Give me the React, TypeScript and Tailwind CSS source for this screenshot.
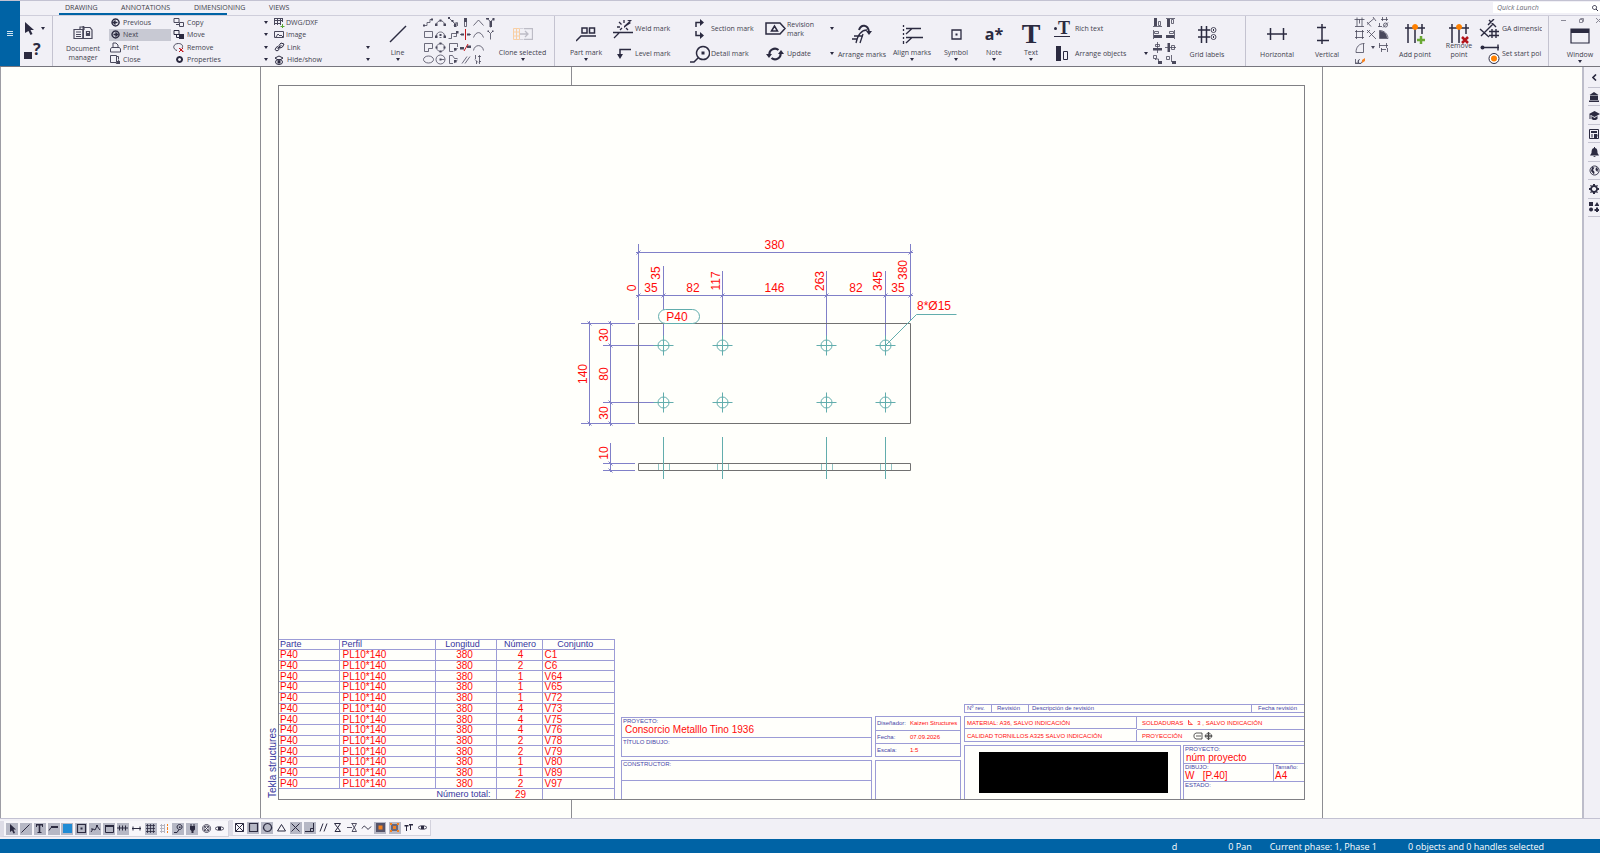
import clsx from 'clsx';
import { Fragment, ReactNode } from 'react';

const INK = '#2b2a40';
const GREY = '#4a495c';

type Shape = { d?: string; f?: string; r?: string; o?: string };

// d = outline, f = filled, r = red outline, o = orange filled
function Ico({ w = 12, h = 12, d, f, r, o, sw = 1, color = INK, className }: Shape & { w?: number; h?: number; sw?: number; color?: string; className?: string }) {
  return (
    <svg width={w} height={h} viewBox={`0 0 ${w} ${h}`} className={clsx('shrink-0', className)} fill="none" aria-hidden="true">
      {f && <path d={f} fill={color} />}
      {d && <path d={d} stroke={color} strokeWidth={sw} />}
      {r && <path d={r} stroke="#c4161c" strokeWidth={1} />}
      {o && <path d={o} fill="#f58220" />}
    </svg>
  );
}

function Caret({ className }: { className?: string }) {
  return <Ico w={4} h={3} f="M0 0h4L2 3Z" className={className} />;
}

function BigButton({ icon, label, caret, className, gap = 'mt-1' }: { icon: ReactNode; label: ReactNode; caret?: boolean; className: string; gap?: string }) {
  return (
    <button type="button" className={clsx('flex shrink-0 flex-col items-center pt-1.5 whitespace-nowrap', className)}>
      <span className="flex h-6 items-center justify-center">{icon}</span>
      <span className={clsx('leading-[9px]', caret ? 'mt-0.5' : gap)}>{label}</span>
      {caret && <Caret className="mt-px" />}
    </button>
  );
}

function RowButton({ icon, label, caret, active, box = 'w-6' }: { icon: ReactNode; label: ReactNode; caret?: boolean; active?: boolean; box?: string }) {
  return (
    <button type="button" className={clsx('flex h-full w-full items-center text-left leading-[9px] whitespace-nowrap', active && 'bg-[#c8c9d3]')}>
      <span className={clsx('flex shrink-0 justify-center', box)}>{icon}</span>
      <span>{label}</span>
      {caret && <Caret className="mr-[3px] ml-auto" />}
    </button>
  );
}

function MiniGrid({ items, className }: { items: Shape[]; className: string }) {
  return (
    <div className={clsx('grid shrink-0 grid-rows-4', className)}>
      {items.map((s, i) => (
        <button key={i} type="button" aria-label={`Tool ${i + 1}`} className="flex items-center justify-center">
          <Ico w={11} h={11} sw={0.8} color={GREY} {...s} />
        </button>
      ))}
    </div>
  );
}

const lineTools: Shape[] = [
  { d: 'M1 8.500h3v-3h3v-3h3', f: 'M0 7.500h2v2H0ZM8 1.500h2v2H8Z' },
  { d: 'M1.500 7.500C2 2.500 9 2.500 9.500 7.500', f: 'M0 6.500h2.500v2.500H0ZM8.500 6.500h2.500v2.500H8.500ZM4.500 2.500h2v2h-2Z' },
  { d: 'M2 2l5 5M6 8.500l3.500-3.500M6.500 6h3v3', f: 'M0 0h2v2H0ZM3.500 3h2v2h-2ZM6 7h2.500v3H6Z' },
  { f: 'M4 1h3v4H4Z', d: 'M4.500 1.500h2v8h-2Z' },
  { d: 'M0.500 8.500L5.500 3L10.500 8.500' },
  { d: 'M2 1.500l3.500 3v6M9 1.500l-3.500 3', f: 'M4.500 4h2.500v6H4.500ZM1 1h3v1.500H1ZM7.500 1h2v2.500h-2Z' },
  { d: 'M1.500 2.500h8v6h-8Z' },
  { d: 'M1.500 7.500C1 1.500 10 1.500 9.500 7.500M4.500 8.500h2', f: 'M0 6.500h2.500v2.500H0ZM8.500 6.500h2.500v2.500H8.500ZM4.500 5h2v2h-2Z' },
  { d: 'M0.500 9.500h3v-5h5M5.500 7.500h3v-4', f: 'M8 2h2.500v2.500H8Z' },
  { d: 'M0 5.500h4M7 5.500h4', f: 'M1 4.500h3v2H1ZM7 4.500h3v2H7Z', r: 'M5.500 0v11' },
  { d: 'M0.500 8.500C3 2 8 2 10.500 8.500' },
  { d: 'M3.500 2.500l2 2v6M7.500 2.500l-2 2', f: 'M2.500 1.500h1.500v1.500H2.500ZM7 1.500h1.500v1.500H7Z' },
  { d: 'M1.500 1.500h8v5h-4v3h-4Z' },
  { d: 'M5.500 1.500a4 4 0 1 0 0.100 0Z', f: 'M4.500 .5h2v2h-2ZM4.500 8.500h2v2h-2ZM.5 4.500h2v2h-2ZM8.500 4.500h2v2h-2Z' },
  { d: 'M9.500 5V1.500h-8v8H5M6 9.500l3.500-3.500', f: 'M6 6h2.500v2.500H6Z' },
  { f: 'M0 5h4v2.500H0ZM7 3.500h4v2.500H7Z', r: 'M4 9L8 2' },
  { d: 'M0.500 8.500C1.500 2 9.500 2 10.500 8.500' },
  {},
  { d: 'M0.500 5.500a5 3.500 0 1 0 10 0a5 3.500 0 1 0 -10 0' },
  { d: 'M1 5.500a4.500 4.500 0 1 0 9 0a4.500 4.500 0 1 0 -9 0M5.500 5.500h4', f: 'M4.500 4.500h2v2h-2Z' },
  { d: 'M5 9.500H1.500v-8h3l2 3h3M6 9l3.500-3', f: 'M6 6h2.500v2.500H6Z' },
  { d: 'M2 9.500L7 2.500M5 9.500L10 2.500' },
  { d: 'M2.500 1v4M6.500 1v9M2 5.500l3 3M8 2.500h-3M8 7.500h-2M3.500 7v3' },
  {}
];

const alignTools: Shape[] = [
  { d: 'M1 9.500h9M6.500 4.500h2v4h-2Z', f: 'M2 1h3v8H2Z' },
  { d: 'M1 1.500h9M6.500 2.500h2v4h-2Z', f: 'M2 2h3v8H2Z' },
  { d: 'M1.500 1v9M2.500 2.500h4v2h-4Z', f: 'M2 6h8v3H2Z' },
  { d: 'M9.500 1v9M4.500 2.500h4v2h-4Z', f: 'M1 6h8v3H1Z' },
  { d: 'M5.500 0v11M3.500 2.500h4v2h-4Z', f: 'M1 6h9v2.500H1Z' },
  { d: 'M0 5.500h11M6.500 3.500h3v4h-3Z', f: 'M2.500 1H5v9H2.500Z' },
  { d: 'M1.500 1.500h3v3h-3ZM3.500 6v-1h3v4', f: 'M6 7h4v3H6Z' },
  { d: 'M1.500 2.500h3v3h-3ZM6.500 1v7', f: 'M7 7h4v3H7Z' }
];

const dimTools: Shape[] = [
  { d: 'M0.500 2.500h10M3 0.500v9M8 0.500v9M1 9.500h9M5.500 2.500v4' },
  { d: 'M1 7.500l7-6M1 5l4 4.500M7 0l3 4' },
  { d: 'M3 2.500h7M4.500 0v4M8.500 0v4M0 9.500h4M1.500 6v4M5.500 8a2 2 0 1 0 4 0a2 2 0 1 0 -4 0M5 10.500l5-5' },
  { d: 'M2.500 1v9M8.500 1v9M1 2.500h9M1 8.500h9' },
  { d: 'M1 1l9 9M9 2L3 8M1 4l3-3' },
  { d: 'M1.500 1.500C6 1.500 10 5 10 9.500h-8.500Z', f: 'M2 2C6 2 9 5 9 9H2Z' },
  { d: 'M2 10.500C2 5 5 1.500 10.500 1.500M2 10.500h7.500v-9' },
  { f: 'M5 4h4L7 7Z' },
  { d: 'M1 3.500h9M1.500 1v5M8.500 1v5M3 7.500h5M3.500 6v4M9.500 6v4' },
  { d: 'M1.500 5v4h3v-3M6 5.500a2 2 0 1 0 2 2M1 9.500h6', o: 'M8 6l3-2v3l-3 2Z' }
];

function Ribbon() {
  return (
    <div className="flex h-[51px] overflow-hidden border-t border-[#cfcedb] text-[7px] text-[#42424e]">
      <div className="flex w-[33px] shrink-0 flex-col justify-between border-r border-[#c4c3d0] py-1.5 pl-1">
        <button type="button" aria-label="Select" className="flex items-center gap-[7px]">
          <Ico w={10} h={13} f="M1 0L10 8H6.500L8.500 12L6.500 13L4.500 9L1 11Z" />
          <Caret />
        </button>
        <button type="button" aria-label="Inquire" className="flex items-end gap-px leading-none">
          <Ico w={8} h={8} f="M0 0h8v7H0Z" />
          <span className="pb-1 text-base leading-[14px] font-bold text-[#2b2a40]">?</span>
        </button>
      </div>

      <BigButton
        className="ml-1 w-[52px]"
        gap="-mt-0.5"
        icon={<Ico w={20} h={14} color={GREY} sw={1.2} d="M1 3.500h9v9H1ZM9.500 12.500h9.500V4l-2-2.500h-5.500M7 3V1h4v3M3 6h5M3 8.500h5M3 10.500h5M13.500 5.500h3v4h-3Z" f="M9.500 0h1.500v13H9.500ZM13 7h3v2h-3Z" className="mb-0.5" />}
        label={<>Document<br />manager</>}
      />

      <div className="grid w-[62px] shrink-0 grid-rows-4">
        <RowButton box="w-3 mr-0.5" icon={<Ico w={9} h={9} d="M4.500 1a3.500 3.500 0 1 0 .1 0ZM2.500 4.500h4M4.500 2.500l-2 2l2 2" sw={1.4} />} label="Previous" />
        <RowButton active box="w-3 mr-0.5" icon={<Ico w={9} h={9} d="M4.500 1a3.500 3.500 0 1 0 .1 0ZM2.500 4.500h4M4.500 2.500l2 2l-2 2" sw={1.4} />} label="Next" />
        <RowButton box="w-3 mr-0.5" icon={<Ico w={11} h={11} color={GREY} d="M.5 10V7l1-1.500h8l1 1.500v3ZM3 5.500v-4.500h3l2 2v2.500" />} label="Print" />
        <RowButton box="w-3 mr-0.5" icon={<Ico w={12} h={11} color={GREY} d="M1.500 1.500h6v7h-6ZM8 2.500h1.500v3M7 6l3 3M10 6l-3 4" f="M8 7h3v3H8Z" />} label="Close" />
      </div>

      <div className="grid w-[100px] shrink-0 grid-rows-4 pl-0.5">
        <RowButton caret box="w-3 mr-0.5" icon={<Ico w={12} h={11} color={GREY} d="M1 1.500h5v4H1ZM6.500 5.500h4v4h-4ZM3 7.500h3" />} label="Copy" />
        <RowButton caret box="w-3 mr-0.5" icon={<Ico w={12} h={11} d="M1 1.500h5v4H1ZM3.500 5.500v3h3" f="M6 5h5v5H6Z" />} label="Move" />
        <RowButton caret box="w-3 mr-0.5" icon={<Ico w={12} h={11} color={GREY} d="M4 8.500C-1 7 0 1.500 5.500 1.500C9 1.500 10.500 4 9 6" r="M6 6l4 4M10 6l-4 4M6.500 6l4 4" />} label="Remove" />
        <RowButton caret box="w-3 mr-0.5" icon={<Ico w={9} h={9} d="M4.500 2a2.500 2.500 0 1 0 .1 0Z" sw={2} />} label="Properties" />
      </div>

      <div className="grid w-[102px] shrink-0 grid-rows-4 pl-0.5">
        <RowButton
          box="w-3 mr-px"
          icon={
            <svg width="12" height="11" viewBox="0 0 12 11" aria-hidden="true">
              <path d="M1 1.500h9M1 3.500h9M1 6.500h7M1.500 1v7M4.500 1v7M7.500 1v7M9.500 1v4" stroke={GREY} fill="none" />
              <path d="M9.500 7v4M7.500 9.500h4" stroke="#5aa832" fill="none" />
            </svg>
          }
          label="DWG/DXF"
        />
        <RowButton box="w-3 mr-px" icon={<Ico w={10} h={9} color={GREY} d="M.5 1.500h9v6h-9ZM2 7l2-3l2 2l1-1l2 2" />} label="Image" />
        <RowButton caret box="w-3 mr-0.5" icon={<Ico w={11} h={10} d="M5 5.500l-2-1l-2 3l2 1.500l2-1.500ZM5 3.500l2-2.500l3 1l-1.500 3l-2.500 1ZM3.500 7L7.500 3" />} label="Link" />
        <RowButton caret box="w-3 mr-0.5" icon={<Ico w={10} h={10} d="M1 3l4-2l4 2l-4 2.500ZM1.500 7a3.500 2.500 0 1 0 7 0a3.500 2.500 0 1 0 -7 0" f="M3.500 5.500h3v3h-3Z" />} label="Hide/show" />
      </div>

      <BigButton caret className="w-[49px]" icon={<Ico w={18} h={18} d="M1 17L17 1" sw={1.5} />} label="Line" />
      <MiniGrid className="w-[75px] grid-cols-6" items={lineTools} />
      <BigButton
        caret
        className="mr-1.5 w-[51px]"
        icon={
          <svg width="20" height="12" viewBox="0 0 20 12" fill="none" aria-hidden="true">
            <path d="M11 .5h8.500v11H11M7 6h8M12 3l3 3l-3 3" stroke="#bdbcc6" strokeWidth="1.300" />
            <path d="M6.500 .5h4M6.500 11.500h4" stroke="#d2d1da" />
            <path d="M.5 .5h6v11h-6ZM.5 4h6M.5 8h6M3.500 .5v11" stroke="#f8cfa4" />
          </svg>
        }
        label="Clone selected"
      />

      <BigButton
        caret
        className="w-[57px] border-l border-[#c4c3d0] pl-1.5"
        icon={<Ico w={21} h={15} sw={1.5} d="M0 14l5-5h15M6 1h5v5H6ZM13.500 1h5v5h-5Z" />}
        label="Part mark"
      />
      <div className="grid w-[76px] shrink-0 grid-rows-2">
        <RowButton icon={<Ico w={21} h={20} sw={1.3} d="M1 19l5-5M0 13.500h20M4 8h3M6 3l2.500 2.500M11 1v3M15 11l-2-2M7 11l2-2" f="M11 7l5-4.500l2 1.500l-4.500 3L11 9ZM14 1h5l-2 2Z" />} label="Weld mark" />
        <RowButton icon={<Ico w={15} h={11} sw={1.5} d="M15 1.500H4v7" f="M1 6h6L4 11Z" />} label="Level mark" />
      </div>
      <div className="grid w-[76px] shrink-0 grid-rows-2">
        <RowButton icon={<Ico w={11} h={20} sw={1.5} d="M2 8V3.500h5M2 12v4.500h5" f="M6 0l4 3.500L6 7ZM6 13l4 3.500L6 20Z" />} label="Section mark" />
        <RowButton icon={<Ico w={21} h={18} sw={1.5} d="M1 17h4l4-4M14 1.500a6.500 6.500 0 1 0 .1 0Z" f="M12.500 6.500h3v3h-3Z" />} label="Detail mark" />
      </div>
      <div className="grid w-[74px] shrink-0 grid-rows-2">
        <RowButton caret icon={<Ico w={21} h={13} sw={1.5} d="M1 1h14l5 5.500l-5 5.500H1ZM6.500 9l3-5l3 5Z" />} label={<>Revision<br />mark</>} />
        <RowButton caret icon={<Ico w={18} h={16} sw={2.2} d="M3.500 9a5.500 5.500 0 0 1 9-5M14.500 7a5.500 5.500 0 0 1-9 5" f="M0 8h6L3 12ZM12 8h6L15 4Z" />} label="Update" />
      </div>

      <BigButton
        className="w-[50px]"
        icon={
          <svg width="20" height="20" viewBox="0 0 20 20" fill="none" aria-hidden="true">
            <path d="M7 6C9 0 16 0 17 8" stroke={INK} strokeWidth="2" />
            <path d="M14 7h6l-3 4Z" fill={INK} />
            <path d="M0 15h5M2 12h9M4 19C6 10 9 6 15 6M8 19L11 10" stroke={INK} strokeWidth="1.300" />
          </svg>
        }
        label="Arrange marks"
      />
      <BigButton caret className="w-[50px]" icon={<Ico w={21} h={19} sw={1.3} d="M1.500 0v2M1.500 4v2M1.500 8v2M1.500 12v2M1.500 16v3M4 3.500h15M4 12.500h17M4 9l6-5.500M4 18l6-5.500" />} label="Align marks" />
      <BigButton caret className="w-[38px]" icon={<Ico w={11} h={11} sw={1.3} d="M1 1h9v9H1Z" f="M4.500 4.500h2v2h-2Z" />} label="Symbol" />
      <BigButton caret className="w-[38px]" icon={<span className="text-base leading-none font-bold text-[#2b2a40]">a*</span>} label="Note" />
      <BigButton caret className="w-9" icon={<span className="font-['Liberation_Serif',serif] text-[28px] leading-none font-bold text-[#2b2a40]">T</span>} label="Text" />
      <div className="grid w-[102px] shrink-0 grid-rows-2">
        <RowButton
          box="w-[26px]"
          icon={
            <span className="flex w-4 items-center justify-end border-b border-[#2b2a40] font-['Liberation_Serif',serif] text-lg leading-[15px] font-bold text-[#2b2a40]">
              <span className="mr-px size-[3px] rounded-full bg-[#2b2a40]" />T
            </span>
          }
          label="Rich text"
        />
        <RowButton caret box="w-[26px]" icon={<Ico w={12} h={15} d="M7.500 5.500h4v8h-4Z" f="M0 0h5v15H0Z" />} label="Arrange objects" />
      </div>
      <MiniGrid className="w-[26px] grid-cols-2" items={alignTools} />
      <BigButton
        className="mr-2 w-[60px]"
        icon={
          <svg width="19" height="18" viewBox="0 0 19 18" fill="none" aria-hidden="true">
            <path d="M0 5h12M0 12h12M3.500 1v17M8.500 1v17" stroke={INK} strokeWidth="1.500" />
            <circle cx="15.500" cy="5" r="2.500" stroke={GREY} />
            <circle cx="15.500" cy="12" r="2.500" stroke={GREY} />
            <path d="M15 4h1v2h-1ZM15 11h1v2h-1Z" fill={INK} />
          </svg>
        }
        label="Grid labels"
      />

      <BigButton className="w-[63px] border-l border-[#c4c3d0]" icon={<Ico w={20} h={12} sw={1.5} d="M0 6h20M3.500 0v12M16.500 0v12" />} label="Horizontal" />
      <BigButton className="w-[38px]" icon={<Ico w={12} h={20} sw={1.5} d="M5 0v20M0 3.500h9M0 16.500h12" className="mr-2" />} label="Vertical" />
      <MiniGrid className="ml-[7px] w-9 grid-cols-3" items={dimTools} />
      <BigButton
        className="w-[52px]"
        icon={
          <svg width="20" height="22" viewBox="0 0 20 22" fill="none" aria-hidden="true">
            <path d="M0 5h20M3 1v19M10 5v15M17 1v10" stroke={INK} strokeWidth="1.500" />
            <path d="M10 1a3 3 0 1 0 .1 0Z" fill="#ff8000" />
            <path d="M16 13v8M12 17h8" stroke="#6aa834" strokeWidth="2.500" />
          </svg>
        }
        label="Add point"
      />
      <BigButton
        className="w-9"
        gap="-mt-[5px]"
        icon={
          <svg width="20" height="22" viewBox="0 0 20 22" fill="none" aria-hidden="true">
            <path d="M0 5h20M3 1v19M10 5v15M17 1v10" stroke={INK} strokeWidth="1.500" />
            <path d="M10 1a3 3 0 1 0 .1 0Z" fill="#ff8000" />
            <path d="M13 14l6 6M19 14l-6 6" stroke="#b3151b" strokeWidth="2.500" />
          </svg>
        }
        label={<>Remove<br />point</>}
      />
      <div className="mr-1.5 grid w-[65px] shrink-0 grid-rows-2 overflow-hidden">
        <RowButton box="w-[25px]" icon={<Ico w={21} h={20} sw={1.4} d="M1 10l9 8M2 17L14 5M10 1l7 7M15 0l-6 6M10 12.500h10M10 16.500h10M13 10v9M17 10v9" />} label="GA dimensic" />
        <RowButton
          box="w-[25px]"
          icon={
            <svg width="20" height="22" viewBox="0 0 20 22" fill="none" aria-hidden="true">
              <path d="M2 4.500h17M18 1.500v6" stroke={INK} strokeWidth="1.400" />
              <circle cx="2.500" cy="4.500" r="2" fill={INK} />
              <circle cx="14" cy="15.500" r="5" stroke={INK} fill="#fff" />
              <circle cx="14" cy="15.500" r="3" fill="#ff8000" />
            </svg>
          }
          label="Set start poi"
        />
      </div>

      <div className="relative min-w-0 flex-1 overflow-hidden border-l border-[#c4c3d0]">
        <BigButton
          className="w-[62px]"
          icon={<Ico w={20} h={16} sw={1.2} d="M1 1h18v14H1Z" f="M1 1h18v4H1Z" className="mt-1" />}
          label={<>Window<Caret className="mx-auto mt-px" /></>}
        />
        <div className="absolute top-0.5 left-3 flex w-10 justify-between">
          <Ico w={5} h={5} d="M0 2.500h5" color="#8a8996" />
          <Ico w={5} h={5} d="M.5 1.500h3v3h-3ZM1.500 1.500v-1h3v3h-1" color="#8a8996" />
          <Ico w={5} h={5} d="M0 0l5 5M5 0L0 5" color="#8a8996" />
        </div>
      </div>
    </div>
  );
}

function Header() {
  return (
    <header className="flex border-t border-b border-t-[#c3c2d2] border-b-[#77767e]">
      <button type="button" aria-label="Menu" className="flex w-5 shrink-0 items-center justify-center bg-[#0063a5]">
        <Ico w={6} h={6} d="M0 .5h6M0 2.500h6M0 4.500h6" color="#cfe4f2" />
      </button>
      <div className="min-w-0 flex-1">
        <nav className="flex h-3 items-end pl-[45px] text-[7px] leading-[10px] text-[#3c3c48]">
          <a href="#drawing" className="w-14">DRAWING</a>
          <a href="#annotations" className="w-[73px]">ANNOTATIONS</a>
          <a href="#dimensioning" className="w-[75px]">DIMENSIONING</a>
          <a href="#views">VIEWS</a>
          <label className="ml-auto flex h-[11px] w-[107px] items-center bg-white pl-1">
            <input placeholder="Quick Launch" aria-label="Quick Launch" className="w-[95px] text-[7px] italic outline-none placeholder:text-[#6d6c78]" />
            <Ico w={6} h={6} d="M2.500 .5a2 2 0 1 0 .1 0ZM4 4l2 2" />
          </label>
        </nav>
        <div className="ml-[39px] h-0.5 w-[168px] bg-[#0063a5]" />
        <Ribbon />
      </div>
    </header>
  );
}

const holes = [103.5, 162.5, 266.5, 325.5];

function PlateDrawing() {
  return (
    <svg width="464" height="260" viewBox="0 0 464 260" fill="none" className="max-w-full font-['Liberation_Sans',Arial,sans-serif]">
      <g stroke="#8080c8">
        <path d="M78.500 14v76M350.500 14v76M76 22.500h277M76 65.500h277M103.500 36v74M162.500 41v69M266.500 41v69M325.500 41v69" />
        <path d="M21 93.500h54M21 193.500h54M43 115.500h55M43 172.500h55M29.500 91v105M50.500 91v105M50.500 213v29M43 233.500h32M43 240.500h32" />
        {[78.5, 350.5].map((x) => <path key={x} d={`M${x - 2} 24.500l4-4`} />)}
        {[78.5, ...holes, 350.5].map((x) => <path key={x} d={`M${x - 2} 67.500l4-4`} />)}
        {[93.5, 115.5, 172.5, 193.5, 233.5, 240.5].map((y) => <path key={y} d={`M48.500 ${y - 2}l4 4`} />)}
        {[93.5, 193.5].map((y) => <path key={y} d={`M27.500 ${y - 2}l4 4`} />)}
      </g>
      <path d="M78.500 93.500h272v100h-272ZM78.500 233.500h272v7h-272Z" stroke="#717171" />
      <g stroke="#62adad">
        {holes.map((x) => (
          <Fragment key={x}>
            {[115.5, 172.5].map((y) => (
              <Fragment key={y}>
                <circle cx={x} cy={y} r="5.500" />
                <path d={`M${x - 10} ${y}h20M${x} ${y - 10}v20`} />
              </Fragment>
            ))}
            <path d={`M${x} 207v42`} />
            <path d={`M${x - 5} 234v6M${x + 6} 234v6`} strokeOpacity="0.7" />
          </Fragment>
        ))}
        <rect x="98.500" y="79.500" width="41" height="14" rx="7" fill="#fffffb" />
        <path d="M325.500 115.500l31-31h40" />
      </g>
      <g fill="#ff0a0a" fontSize="12" textAnchor="middle">
        <text x="214.500" y="19">380</text>
        <text x="91" y="62">35</text>
        <text x="133" y="62">82</text>
        <text x="214.500" y="62">146</text>
        <text x="296" y="62">82</text>
        <text x="338" y="62">35</text>
        <text x="117" y="91">P40</text>
        <text x="374" y="80">8*Ø15</text>
        {[
          ['0', 76, 58],
          ['35', 100, 43],
          ['117', 160, 51],
          ['263', 264, 51],
          ['345', 322, 51],
          ['380', 347, 40],
          ['140', 27, 144],
          ['30', 48, 105],
          ['80', 48, 144],
          ['30', 48, 183],
          ['10', 48, 223]
        ].map(([t, x, y]) => (
          <text key={`${x}-${y}`} transform={`translate(${x} ${y}) rotate(-90)`}>{t}</text>
        ))}
      </g>
    </svg>
  );
}

const parts: [string, number][] = [
  ['C1', 4], ['C6', 2], ['V64', 1], ['V65', 1], ['V72', 1], ['V73', 4], ['V75', 4],
  ['V76', 4], ['V78', 2], ['V79', 2], ['V80', 1], ['V89', 1], ['V97', 2]
];

const cell = 'border border-[#9c9cd6] p-0';

function PartsTable() {
  return (
    <table className="-mr-px h-[160px] w-[336px] shrink-0 table-fixed border-collapse text-[10px] leading-[9px] text-[#ff0a0a]">
      <colgroup>
        <col className="w-[60px]" />
        <col className="w-24" />
        <col className="w-[61px]" />
        <col className="w-[46px]" />
        <col />
      </colgroup>
      <thead>
        <tr className="text-[9px] text-[#3535a0]">
          <th className={clsx(cell, 'border-l-0 pl-px text-left font-normal')}>Parte</th>
          <th className={clsx(cell, 'pl-0.5 text-left font-normal')}>Perfil</th>
          <th className={clsx(cell, 'pr-1.5 font-normal')}>Longitud</th>
          <th className={clsx(cell, 'pl-0.5 font-normal')}>Número</th>
          <th className={clsx(cell, 'pr-1.5 font-normal')}>Conjunto</th>
        </tr>
      </thead>
      <tbody>
        {parts.map(([name, count]) => (
          <tr key={name}>
            <td className={clsx(cell, 'border-l-0 pl-px')}>P40</td>
            <td className={clsx(cell, 'pl-[3px]')}>PL10*140</td>
            <td className={clsx(cell, 'pr-0.5 text-center')}>380</td>
            <td className={clsx(cell, 'pl-[3px] text-center')}>{count}</td>
            <td className={clsx(cell, 'pl-0.5')}>{name}</td>
          </tr>
        ))}
        <tr>
          <td colSpan={3} className={clsx(cell, 'border-b-0 border-l-0 pr-[5px] text-right text-[9px] text-[#3535a0]')}>Número total:</td>
          <td className={clsx(cell, 'border-b-0 pl-[3px] text-center')}>29</td>
          <td className={clsx(cell, 'border-b-0')} />
        </tr>
      </tbody>
    </table>
  );
}

function TitleBlock() {
  return (
    <div className="flex min-w-0 flex-1 items-end gap-[3px] pl-[7px] text-[6px] leading-[7px] text-[#4545a8]">
      <div className="flex w-[251px] shrink-0 flex-col gap-[3px]">
        <div className="border border-[#9c9cd6]">
          <div className="h-5 border-b border-[#9c9cd6] pl-px">
            <p>PROYECTO:</p>
            <p className="pl-0.5 text-[10px] leading-[10px] text-[#ff0a0a]">Consorcio Metalllo Tino 1936</p>
          </div>
          <div className="h-[18px] pt-px pl-px">TÍTULO DIBUJO:</div>
        </div>
        <div className="border border-b-0 border-[#9c9cd6]">
          <div className="h-5 border-b border-[#9c9cd6] pl-px">CONSTRUCTOR:</div>
          <div className="h-[18px]" />
        </div>
      </div>

      <div className="flex w-[86px] shrink-0 flex-col gap-[3px]">
        <dl className="grid grid-cols-[34px_1fr] border border-[#9c9cd6] leading-[12px] whitespace-nowrap">
          <dt className="h-[14px] border-b border-[#9c9cd6] pl-px">Diseñador:</dt>
          <dd className="border-b border-[#9c9cd6] text-[#ff0a0a]">Kaizen Structures</dd>
          <dt className="h-[13px] border-b border-[#9c9cd6] pl-px">Fecha:</dt>
          <dd className="border-b border-[#9c9cd6] text-[#ff0a0a]">07.09.2026</dd>
          <dt className="h-3 pl-px">Escala:</dt>
          <dd className="text-[#ff0a0a]">1:5</dd>
        </dl>
        <div className="h-[39px] border border-b-0 border-[#9c9cd6]" />
      </div>

      <div className="flex min-w-0 flex-1 flex-col gap-[3px] whitespace-nowrap">
        <div className="flex h-[9px] border border-r-0 border-[#9c9cd6]">
          <span className="w-[27px] border-r border-[#9c9cd6] pl-0.5">Nº rev.</span>
          <span className="w-[37px] border-r border-[#9c9cd6] pl-[5px]">Revisión</span>
          <span className="flex-1 pl-[3px]">Descripción de revisión</span>
          <span className="w-[53px] border-l border-[#9c9cd6] pl-1.5">Fecha revisión</span>
        </div>
        <div className="grid grid-cols-[172px_1fr] border border-r-0 border-[#9c9cd6] leading-[12px] text-[#ff0a0a]">
          <span className="h-3 border-r border-b border-[#9c9cd6] pl-0.5">MATERIAL: A36, SALVO INDICACIÓN</span>
          <span className="flex items-center gap-1 border-b border-[#9c9cd6] pl-[5px]">
            SOLDADURAS
            <Ico w={6} h={6} color="#ff0a0a" d="M1.500 0v4.500h4M1.500 1l3.500 3.500" sw={0.7} />
            <span>3 , SALVO INDICACIÓN</span>
          </span>
          <span className="h-[11px] border-r border-[#9c9cd6] pl-0.5">CALIDAD TORNILLOS A325 SALVO INDICACIÓN</span>
          <span className="flex h-[11px] items-center gap-[11px] pl-[5px]">
            PROYECCIÓN
            <Ico w={20} h={8} color="#333" sw={0.8} d="M1 2.500l2-1.500h6v6H3L1 5.500ZM3 4h5M15.500 1a3 3 0 1 0 .1 0ZM15.500 0v8M11.500 4h8M15.500 2.500a1.500 1.500 0 1 0 .1 0Z" />
          </span>
        </div>
        <div className="flex gap-0.5">
          <div className="flex h-[54px] w-[217px] shrink-0 items-center justify-center border border-b-0 border-[#9c9cd6] pl-0.5">
            <div className="h-[41px] w-[189px] bg-black" />
          </div>
          <div className="flex-1 border border-r-0 border-b-0 border-[#9c9cd6]">
            <div className="h-[18px] border-b border-[#9c9cd6] pl-px">
              <p className="leading-[6px]">PROYECTO:</p>
              <p className="pl-px text-[10px] leading-[11px] text-[#ff0a0a]">núm proyecto</p>
            </div>
            <div className="flex h-[18px] border-b border-[#9c9cd6]">
              <div className="flex-1 pl-px">
                <p className="leading-[6px]">DIBUJO:</p>
                <p className="text-[10px] leading-[11px] whitespace-pre text-[#ff0a0a]">W   [P.40]</p>
              </div>
              <div className="w-[31px] border-l border-[#9c9cd6] pl-px">
                <p className="leading-[6px]">Tamaño:</p>
                <p className="text-[10px] leading-[11px] text-[#ff0a0a]">A4</p>
              </div>
            </div>
            <p className="h-[17px] pl-px leading-[6px]">ESTADO:</p>
          </div>
        </div>
      </div>
    </div>
  );
}

function Sheet() {
  return (
    <div className="flex w-full max-w-[1063px] flex-col border-x border-[#8d8d92] font-['Liberation_Sans',Arial,sans-serif]">
      <div className="ml-[310px] h-[18px] border-l border-[#8d8d92]" />
      <div className="flex min-h-0 flex-1 pr-[17px]">
        <div className="flex w-[17px] shrink-0 items-end justify-end pb-0.5">
          <span className="rotate-180 text-[10px] leading-[10px] whitespace-nowrap text-[#3535a0] [writing-mode:vertical-rl]">Tekla structures</span>
        </div>
        <div className="flex min-w-0 flex-1 flex-col border border-[#808084]">
          <div className="flex flex-1 items-start justify-center pt-36">
            <PlateDrawing />
          </div>
          <div className="flex items-end">
            <PartsTable />
            <TitleBlock />
          </div>
        </div>
      </div>
      <div className="ml-[310px] h-[18px] border-l border-[#8d8d92]" />
    </div>
  );
}

const sideIcons: [string, ReactNode][] = [
  ['Components', <Ico w={10} h={10} f="M5 0l4.500 3H.5ZM1 3.500h8V8H1ZM0 8.500h10V10H0Z" />],
  ['Learning', <Ico w={11} h={9} f="M5.500 0L11 3L5.500 6L0 3ZM2.500 5l3 2l3-2v3C7 9.500 4 9.500 2.500 8ZM.5 3h1v5h-1Z" />],
  ['Properties', <Ico w={10} h={10} d="M.5 .5h9v9h-9ZM2 3h6M3 5v3.500M6 5.500h2v2h-2Z" f="M2 2h6v2H2ZM5 5h3v4H5Z" />],
  ['Notifications', <Ico w={9} h={10} f="M4 0h1v1C7 1.500 7.500 3 7.500 6L9 8.500H0L1.500 6C1.500 3 2 1.500 4 1ZM3 9h3L4.500 10Z" />],
  ['Online', <Ico w={11} h={11} d="M5.500 1a4.500 4.500 0 1 0 .1 0Z" f="M3 2l2.500.5L4 5l1.500 2L5 9.500L2 6ZM7 2l2 2l-.5 3L6.500 5Z" />],
  ['Settings', <Ico w={10} h={10} d="M5 2a3 3 0 1 0 .1 0Z" f="M4 0h2v2H4ZM4 8h2v2H4ZM0 4h2v2H0ZM8 4h2v2H8ZM1 1l2 .5L2 3ZM9 1L7 1.500L8 3ZM1 9l2-.5L2 7ZM9 9l-2-.5L8 7Z" sw={1.8} />],
  ['Applications', <Ico w={10} h={10} f="M0 0h4v4H0ZM8 0l2.500 4h-5ZM2 5.500a2 2 0 1 0 .1 0ZM7 5.500h2v1.500h1.500v2H9V10H7V9H5.500V7H7Z" />]
];

function SidePane() {
  return (
    <aside className="w-[18px] shrink-0 border-l-2 border-[#bdbdca] bg-[#f1f0f6]">
      <div className="flex h-[150px] flex-col pl-1 [&>button]:border-b [&>button]:border-[#c4c3d0]">
        <button type="button" aria-label="Expand" className="flex h-[21px] items-center justify-center">
          <Ico w={5} h={7} d="M4 .5L1 3.500l3 3" sw={1.6} />
        </button>
        {sideIcons.map(([name, icon]) => (
          <button key={name} type="button" aria-label={name} className="flex flex-1 items-center justify-center">
            {icon}
          </button>
        ))}
      </div>
    </aside>
  );
}

type Switch = [Shape & { color?: string; sw?: number }, boolean];

const selectSwitches: Switch[] = [
  [{ f: 'M3 1l6 5.500H6.500L8 10l-1.500.5L5 7.500L3 9Z' }, true],
  [{ d: 'M1.500 9.500L9.500 1.500' }, true],
  [{ f: 'M2 1h7v3H8V2.500H6.300V9H7.500v1h-4V9h1.200V2.500H3V4H2Z' }, true],
  [{ d: 'M1 7.500l2-3h7M3 3.500h7' }, true],
  [{ f: 'M1 1h9v9H1Z', color: '#1f8bd4' }, true],
  [{ d: 'M1.500 1.500h8v8h-8Z', f: 'M4.500 4.500h2v2h-2Z', sw: 1.2 }, true],
  [{ d: 'M1 9l2-3l2 1l2-4l3 4M1 6h2', f: 'M6 2h2v2H6Z' }, true],
  [{ d: 'M1.500 2.500h8v7h-8Z', f: 'M1 2h9v2H1Z' }, true],
  [{ d: 'M0 5h11M2.500 2.500v5M5.500 2.500v5M8.500 2.500v5' }, true],
  [{ d: 'M1 5.500h9M2 3.500v4M9 3.500v4' }, false],
  [{ d: 'M1 2.500h9M1 5.500h9M1 8.500h9M2.500 1v9M5.500 1v9M8.500 1v9', sw: 0.8 }, true],
  [{ d: 'M1 2.500h5M1 5.500h5M1 8.500h5M2.500 1v9M5.500 1v9', color: '#b5b4c0', o: 'M8 1h1v2H8ZM8 4h1v3H8ZM8 8h1v2H8Z' }, false],
  [{ d: 'M1 9.500h3l2-3M6.500 1.500a2.500 2.500 0 1 0 .1 0Z', f: 'M6 3.500h1.500V5H6Z' }, true],
  [{ f: 'M3 3h5v3.500L6.500 8v2h-2V8L3 6.500ZM3.500 1h1v2h-1ZM6.500 1h1v2h-1Z' }, true],
  [{ d: 'M5.500 1.500a4 4 0 1 0 .1 0ZM3 3l5 5M8 3L3 8M5.500 3a2.500 2.500 0 1 0 .1 0Z', sw: 0.8 }, false],
  [{ d: 'M1 5.500C3 3 8 3 10 5.500C8 8 3 8 1 5.500Z', f: 'M4 4h3v3H4Z', sw: 0.8 }, false]
];

const snapSwitches: Switch[] = [
  [{ d: 'M1.500 1.500h8v8h-8ZM1.500 1.500l8 8M9.500 1.500l-8 8' }, false],
  [{ d: 'M1.500 1.500h8v8h-8Z', sw: 1.2 }, true],
  [{ d: 'M5.500 1.500a4 4 0 1 0 .1 0Z', sw: 1.2 }, true],
  [{ d: 'M5.500 2.500L9.500 9h-8Z' }, false],
  [{ d: 'M1.500 1.500l8 8M9.500 1.500l-8 8' }, true],
  [{ d: 'M1 9.500h8.500V1M6.500 9V6.500h3' }, true],
  [{ d: 'M2 9.500l3-8M6 9.500l3-8' }, false],
  [{ d: 'M2.500 1.500h6L3 9.500h5.500L2.500 1.500' }, false],
  [{ d: 'M4.500 1.500h5L5 9.500h4.500L5 1.500M0 5.500h5', sw: 0.8 }, false],
  [{ d: 'M1 6.500C3 3 4 4 5.500 6S8 7 10 4.500' }, false],
  [{ f: 'M1 1h9v9H1Z', color: '#55546a', o: 'M3.500 3.500h4v4h-4Z' }, true],
  [{ f: 'M2 2h7v7H2Z', color: '#6a697c', o: 'M1 1h2v2H1ZM8 1h2v2H8ZM1 8h2v2H1ZM8 8h2v2H8ZM4 4h3v3H4Z' }, true],
  [{ d: 'M3.500 3v6M7.500 2v6', f: 'M1.500 3h4v1.500h-4ZM6 2h4v1.500H6Z' }, false],
  [{ d: 'M1 5.500C3 3 8 3 10 5.500C8 8 3 8 1 5.500Z', f: 'M4 4h3v3H4Z', sw: 0.8 }, false]
];

function SwitchBar({ items, className, label }: { items: Switch[]; className: string; label: string }) {
  return (
    <div role="toolbar" aria-label={label} className={clsx('flex items-center justify-between border-r border-b border-l-4 border-[#d3d2dd] border-l-[#dddce6] bg-[#f7f6fa]', className)}>
      {items.map(([shape, on], i) => (
        <button key={i} type="button" aria-pressed={on} aria-label={`${label} ${i + 1}`} className={clsx('flex size-3 items-center justify-center', on && 'bg-[#b6b8c5]')}>
          <Ico w={11} h={11} {...shape} />
        </button>
      ))}
    </div>
  );
}

export default function App() {
  return (
    <div className="flex min-h-screen flex-col overflow-hidden bg-[#f1f0f6] font-['Open_Sans','Noto_Sans',sans-serif]">
      <Header />
      <main className="flex flex-1">
        <div className="flex min-w-0 flex-1 justify-center border-l border-[#9d9da4] bg-[#fffffb]">
          <Sheet />
        </div>
        <SidePane />
      </main>
      <div className="flex h-[21px] items-start border-t border-[#c3c2d2] bg-[#f1f0f6]">
        <SwitchBar label="Select switch" items={selectSwitches} className="mt-0.5 h-4 w-[229px] pr-0.5 pl-0.5" />
        <SwitchBar label="Snap switch" items={snapSwitches} className="mt-px h-4 w-[202px] pr-px" />
      </div>
      <footer className="flex h-[14px] items-center justify-end bg-[#0063a5] pt-0.5 pr-14 text-[9px] leading-[12px] whitespace-nowrap text-white">
        <span className="mr-[51px]">d</span>
        <span className="mr-[18px]">0 Pan</span>
        <span className="mr-[31px]">Current phase: 1, Phase 1</span>
        <span>0 objects and 0 handles selected</span>
      </footer>
    </div>
  );
}
